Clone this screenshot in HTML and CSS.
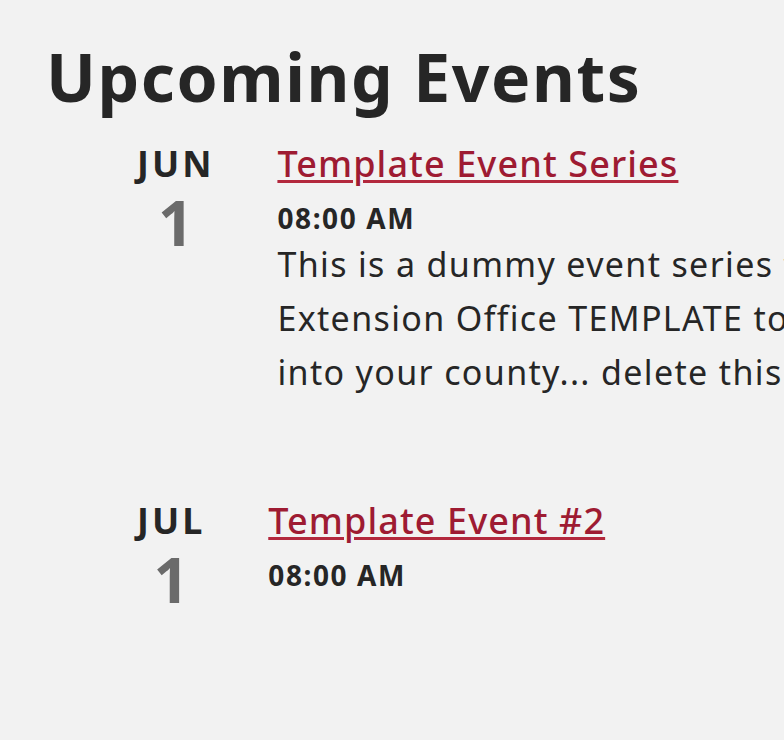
FILE: index.html
```html
<!DOCTYPE html>
<html lang="en">
<head>
  <meta charset="utf-8" />
  <title>Upcoming Events</title>
  <meta name="viewport" content="width=device-width, initial-scale=1">
  <link rel="stylesheet" href="styles.css">
</head>
<body>

<div class="events">
  <h1>Upcoming Events</h1>

  <div class="event">
    <div class="date">
      <div class="month">JUN</div>
      <div class="day">1</div>
    </div>
    <div class="details">
      <a class="title" href="#">Template Event Series</a>
      <div class="time">08:00 AM</div>
      <p class="summary">This is a dummy event series for the<br>Extension Office TEMPLATE to be copied<br>into your county... delete this when done.</p>
    </div>
  </div>

  <div class="event">
    <div class="date">
      <div class="month">JUL</div>
      <div class="day">1</div>
    </div>
    <div class="details">
      <a class="title" href="#">Template Event #2</a>
      <div class="time">08:00 AM</div>
    </div>
  </div>
</div>

</body>
</html>
```

FILE: styles.css
```css
html, body {
  margin:0;
  overflow:hidden;
}
body {
  background-color:#f2f2f2;
  color:#262626;
  font-family:"Noto Sans", sans-serif;
}
.events {
  padding:36px 0 0 46px;
}
h1 {
  margin:0 0 28px 0;
  font-size:66px;
  font-weight:700;
  line-height:80px;
  letter-spacing:1.6px;
}
.event {
  display:flex;
  gap:63px;
  padding-left:91px;
  margin-bottom:102px;
}
.date {
  display:flex;
  flex-direction:column;
  align-items:center;
}
.month {
  font-size:36px;
  font-weight:700;
  line-height:40px;
  letter-spacing:3px;
}
.day {
  margin-top:5px;
  font-size:62px;
  font-weight:700;
  line-height:66px;
  color:#6b6b6b;
}
.details {
  display:flex;
  flex-direction:column;
  align-items:flex-start;
  white-space:nowrap;
}
a.title {
  font-size:36px;
  font-weight:500;
  line-height:40px;
  letter-spacing:1.1px;
  color:#9e1b32;
  text-decoration-color:#b3283d;
  text-decoration-thickness:3px;
  text-underline-offset:3px;
}
.time {
  margin-top:19px;
  font-size:28px;
  font-weight:700;
  line-height:30px;
  letter-spacing:1.6px;
}
.summary {
  margin:4px 0 0 0;
  font-size:34px;
  line-height:54px;
  letter-spacing:1.35px;
}
```
